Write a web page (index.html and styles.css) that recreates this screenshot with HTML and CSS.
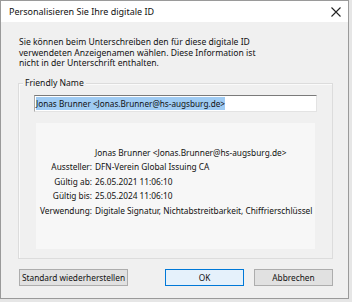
FILE: index.html
```html
<!DOCTYPE html>
<html lang="de">
<head>
<meta charset="utf-8">
<title>Personalisieren Sie Ihre digitale ID</title>
<link rel="stylesheet" href="styles.css">
</head>
<body>
<div class="window">
  <div class="titlebar">
    <span class="title">Personalisieren Sie Ihre digitale ID</span>
    <svg class="close" width="10" height="10" viewBox="0 0 10 10"><path d="M0.5 0.5L9.5 9.5M9.5 0.5L0.5 9.5" stroke="#222" stroke-width="1.1" fill="none"/></svg>
  </div>
  <div class="content">
    <p class="intro">Sie können beim Unterschreiben den für diese digitale ID<br>verwendeten Anzeigenamen wählen. Diese Information ist<br>nicht in der Unterschrift enthalten.</p>
    <div class="group">
      <span class="legend">Friendly Name</span>
      <div class="input"><span class="sel">Jonas Brunner &lt;Jonas.Brunner@hs-augsburg.de&gt;</span></div>
      <div class="panel">
        <div class="info">
          <span class="val name">Jonas Brunner &lt;Jonas.Brunner@hs-augsburg.de&gt;</span>
          <span class="lbl">Aussteller:</span><span class="val">DFN-Verein Global Issuing CA</span>
          <span class="lbl">Gültig ab:</span><span class="val">26.05.2021 11:06:10</span>
          <span class="lbl">Gültig bis:</span><span class="val">25.05.2024 11:06:10</span>
          <span class="lbl">Verwendung:</span><span class="val">Digitale Signatur, Nichtabstreitbarkeit, Chiffrierschlüssel</span>
        </div>
      </div>
    </div>
    <div class="buttons">
      <button class="btn btn-reset">Standard wiederherstellen</button>
      <button class="btn btn-ok">OK</button>
      <button class="btn btn-cancel">Abbrechen</button>
    </div>
  </div>
</div>
</body>
</html>
```
FILE: styles.css
```css
* { box-sizing: border-box; }
html, body { margin: 0; padding: 0; }
body {
  width: 352px;
  height: 302px;
  background: #e6e6e6;
  font-family: "Noto Sans", "Open Sans", sans-serif;
  font-size: 8.6px;
  color: #111;
  overflow: hidden;
}
.window {
  width: 349px;
  height: 299px;
  border: 1px solid #9a9a9a;
  background: #f0f0f0;
  display: flex;
  flex-direction: column;
}
.titlebar {
  flex: 0 0 21px;
  background: #fff;
  display: flex;
  align-items: center;
  justify-content: space-between;
  padding: 0 7px 0 8px;
  font-size: 9px;
  color: #111;
}
.close { display: block; margin-top: 1px; }
.content {
  flex: 1 1 auto;
  display: flex;
  flex-direction: column;
  padding: 0 15px 12px 17px;
}
.intro {
  flex: none;
  margin: 0 0 0 1px;
  padding-top: 15px;
  line-height: 10.5px;
}
.group {
  flex: 1 1 auto;
  display: flex;
  flex-direction: column;
  position: relative;
  margin-top: 14px;
  padding: 11px 15px 9px 15px;
  border: 1px solid #dcdcdc;
  box-shadow: inset 1px 1px 0 #fafafa;
}
.legend {
  position: absolute;
  left: 4px;
  top: -7px;
  padding: 0 2px;
  line-height: 12px;
  background: #f0f0f0;
}
.input {
  flex: 0 0 17px;
  background: #fff;
  border-top: 1px solid #7a7a7a;
  border-left: 1px solid #a9a9a9;
  border-right: 1px solid #e3e3e3;
  border-bottom: 1px solid #e3e3e3;
  display: flex;
  align-items: center;
  padding-left: 1px;
  white-space: nowrap;
  font-size: 8.2px;
}
.sel {
  background: #9fcbf3;
  line-height: 13px;
}
.panel {
  flex: 1 1 auto;
  margin: 11px 2px 0 2px;
  background: #f7f7f7;
  padding-top: 23px;
  font-size: 8.3px;
}
.info {
  display: grid;
  grid-template-columns: 56px 1fr;
  column-gap: 3px;
  line-height: 14.5px;
  white-space: nowrap;
}
.lbl { text-align: right; }
.name { grid-column: 2; }
.buttons {
  flex: none;
  margin-top: 10px;
  display: flex;
  gap: 10px;
}
.btn {
  height: 17px;
  padding: 0;
  font-family: inherit;
  font-size: 8.3px;
  color: #111;
  background: #e1e1e1;
  border: 1px solid #adadad;
  white-space: nowrap;
}
.btn-reset { width: 109px; margin-left: 1px; margin-right: auto; }
.btn-ok { width: 79px; background: #e5f1fb; border-color: #0078d7; }
.btn-cancel { width: 79px; }
```
